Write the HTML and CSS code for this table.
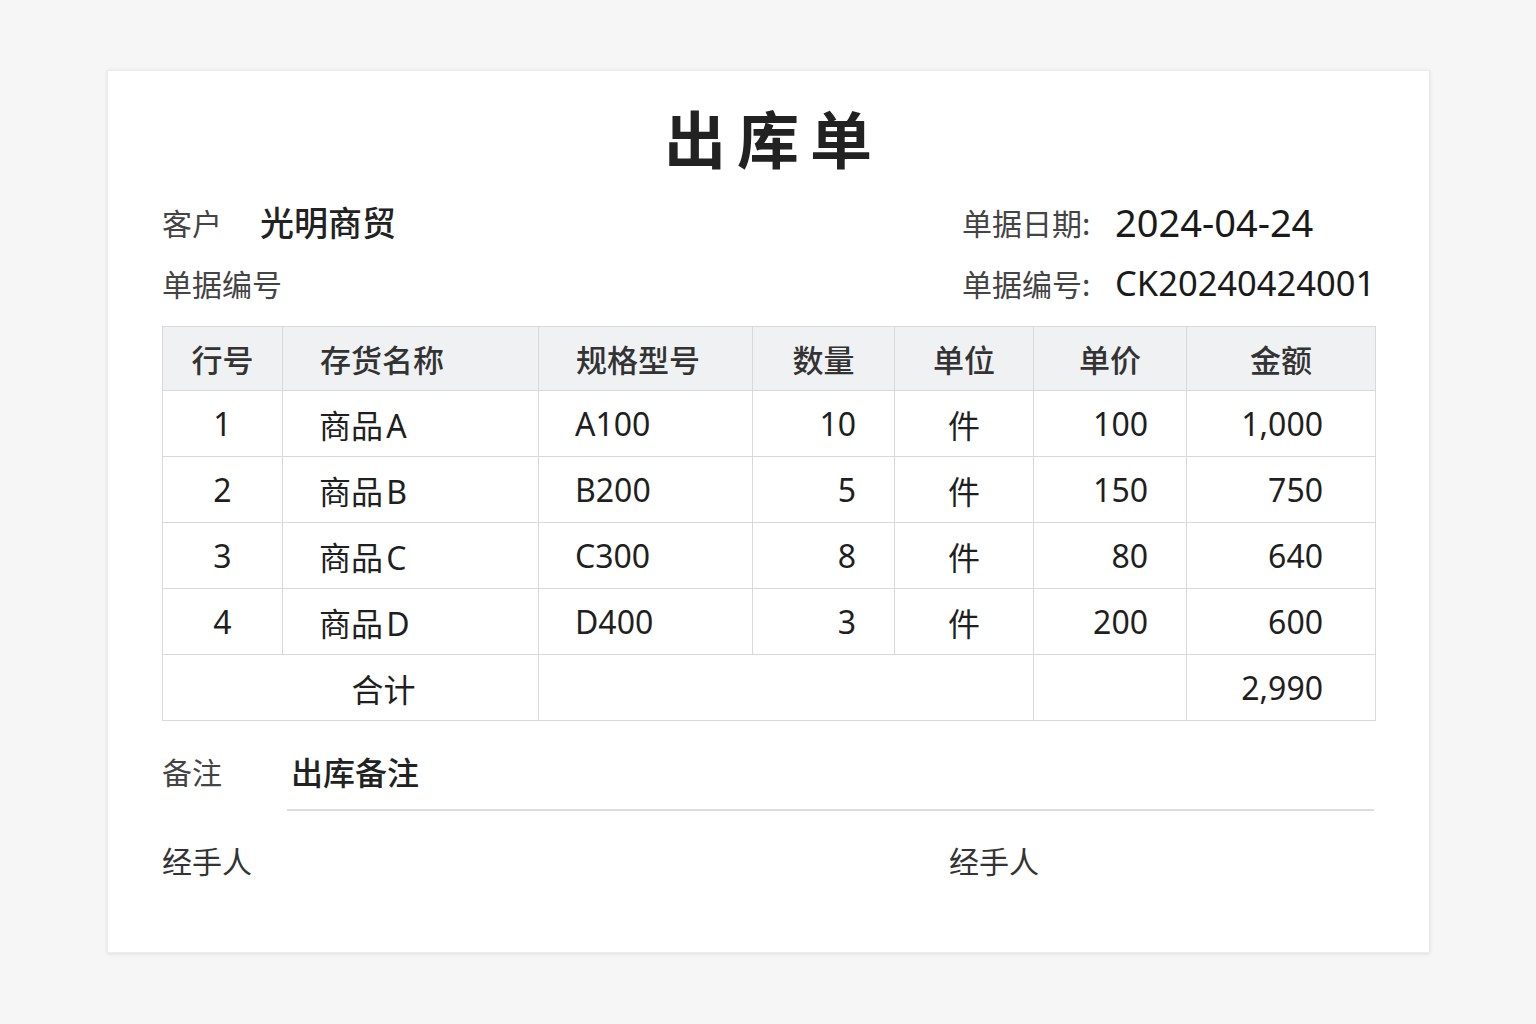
FILE: index.html
```html
<!DOCTYPE html>
<html lang="zh-CN">
<head>
<meta charset="utf-8">
<title>出库单</title>
<link rel="stylesheet" href="styles.css">
</head>
<body>
<div class="card">
  <h1 class="title">出库单</h1>
  <div class="info">
    <div class="info-left">
      <span class="label">客户</span><span class="customer">光明商贸</span>
    </div>
    <div class="info-right">
      <span class="label">单据日期:</span><span class="value date">2024-04-24</span>
    </div>
    <div class="info-left">
      <span class="label">单据编号</span>
    </div>
    <div class="info-right">
      <span class="label">单据编号:</span><span class="value">CK20240424001</span>
    </div>
  </div>

  <table class="grid">
    <colgroup>
      <col class="c1"><col class="c2"><col class="c3"><col class="c4"><col class="c5"><col class="c6"><col class="c7">
    </colgroup>
    <thead>
      <tr>
        <th>行号</th>
        <th class="left">存货名称</th>
        <th class="left">规格型号</th>
        <th>数量</th>
        <th>单位</th>
        <th>单价</th>
        <th>金额</th>
      </tr>
    </thead>
    <tbody>
      <tr><td class="center">1</td><td class="left">商品&#8202;A</td><td class="left">A100</td><td class="num">10</td><td class="center">件</td><td class="num">100</td><td class="amt">1,000</td></tr>
      <tr><td class="center">2</td><td class="left">商品&#8202;B</td><td class="left">B200</td><td class="num">5</td><td class="center">件</td><td class="num">150</td><td class="amt">750</td></tr>
      <tr><td class="center">3</td><td class="left">商品&#8202;C</td><td class="left">C300</td><td class="num">8</td><td class="center">件</td><td class="num">80</td><td class="amt">640</td></tr>
      <tr><td class="center">4</td><td class="left">商品&#8202;D</td><td class="left">D400</td><td class="num">3</td><td class="center">件</td><td class="num">200</td><td class="amt">600</td></tr>
      <tr class="total"><td colspan="2" class="total-label">合计</td><td colspan="3"></td><td></td><td class="amt">2,990</td></tr>
    </tbody>
  </table>

  <div class="remark">
    <span class="label">备注</span>
    <span class="remark-value">出库备注</span>
  </div>

  <div class="sign">
    <span class="sign-label">经手人</span>
    <span class="sign-label">经手人</span>
  </div>
</div>
</body>
</html>
```

FILE: styles.css
```css
* { box-sizing: border-box; }
html, body { margin: 0; padding: 0; }
body {
  background: #f6f6f7;
  font-family: "Noto Sans", "Noto Sans CJK SC", sans-serif;
  color: #222;
  width: 1536px;
  height: 1024px;
  overflow: hidden;
}
.card {
  margin: 70px 0 0 107px;
  width: 1323px;
  height: 883px;
  background: #fff;
  border: 1px solid #ececec;
  box-shadow: 0 1px 4px rgba(0,0,0,0.10);
  padding: 26px 55px 0 54px;
}
.title {
  margin: 0;
  height: 80px;
  line-height: 80px;
  text-align: center;
  font-family: "Noto Sans CJK SC", sans-serif;
  font-size: 62px;
  font-weight: 700;
  letter-spacing: 11px;
  padding-left: 11px;
  color: #222;
}
.info {
  margin-top: 14px;
  display: grid;
  grid-template-columns: 1fr 412px;
  grid-auto-rows: 61px;
  align-items: center;
}
.info-left, .info-right { display: flex; align-items: center; white-space: nowrap; }
.label {
  font-family: "Noto Sans CJK SC", sans-serif;
  font-size: 30px;
  color: #444;
  white-space: nowrap;
  flex-shrink: 0;
}
.info-left .label { min-width: 98px; }
.info-right .label { width: 153px; }
.customer {
  font-family: "Noto Sans CJK SC", sans-serif;
  font-size: 34px;
  font-weight: 500;
  color: #222;
}
.value {
  font-size: 34.5px;
  color: #1a1a1a;
}
.value.date { font-size: 38px; }
.grid {
  margin-top: 13px;
  width: 1213px;
  border-collapse: collapse;
  table-layout: fixed;
  border: 1px solid #d9d9d9;
}
.c1 { width: 120px; } .c2 { width: 256px; } .c3 { width: 214px; }
.c4 { width: 142px; } .c5 { width: 139px; } .c6 { width: 153px; } .c7 { width: 189px; }
.grid th, .grid td {
  border: 1px solid #d9d9d9;
  padding: 0;
}
.grid th {
  height: 64px;
  background: #f0f1f3;
  font-family: "Noto Sans CJK SC", sans-serif;
  font-size: 31px;
  font-weight: 500;
  color: #333;
  text-align: center;
}
.grid th.left { text-align: left; padding-left: 37px; }
.grid td {
  height: 66px;
  font-size: 32px;
  color: #1f1f1f;
}
.grid td.left { padding-left: 36px; }
.grid td.center { text-align: center; }
.grid td.num { text-align: right; padding-right: 38px; }
.grid td.amt { text-align: right; padding-right: 52px; }
.grid td.total-label { text-align: center; padding-left: 66px; }
.remark {
  margin-top: 28px;
  display: grid;
  grid-template-columns: 125px 1fr;
  align-items: start;
}
.remark .label { line-height: 44px; }
.remark-value {
  display: block;
  line-height: 44px;
  padding: 0 0 16px 4px;
  border-bottom: 2px solid #dddddd;
  font-family: "Noto Sans CJK SC", sans-serif;
  font-size: 32px;
  font-weight: 500;
  color: #222;
}
.sign {
  margin-top: 27px;
  display: grid;
  grid-template-columns: 787px 1fr;
}
.sign-label {
  line-height: 44px;
  font-family: "Noto Sans CJK SC", sans-serif;
  font-size: 30px;
  color: #333;
}
```
